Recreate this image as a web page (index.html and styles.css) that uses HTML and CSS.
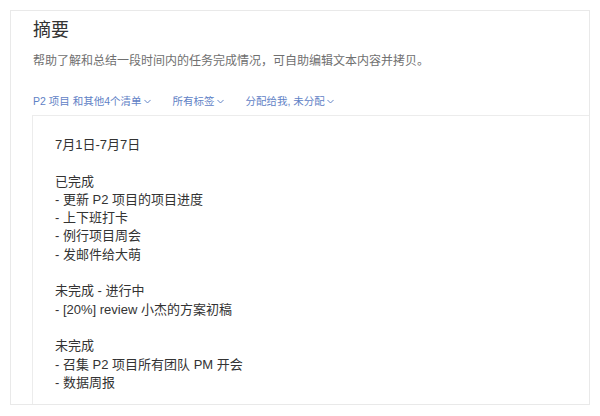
FILE: index.html
```html
<!DOCTYPE html>
<html lang="zh-CN">
<head>
<meta charset="utf-8">
<title>摘要</title>
<link rel="stylesheet" href="styles.css">
</head>
<body>
<div class="card">
  <h1 class="title">摘要</h1>
  <p class="desc">帮助了解和总结一段时间内的任务完成情况，可自助编辑文本内容并拷贝。</p>
  <div class="filters">
    <span class="filter">P2 项目 和其他4个清单<svg class="chev" viewBox="0 0 8 5"><path d="M0.5 0.7 L4 4.2 L7.5 0.7"/></svg></span>
    <span class="filter">所有标签<svg class="chev" viewBox="0 0 8 5"><path d="M0.5 0.7 L4 4.2 L7.5 0.7"/></svg></span>
    <span class="filter">分配给我, 未分配<svg class="chev" viewBox="0 0 8 5"><path d="M0.5 0.7 L4 4.2 L7.5 0.7"/></svg></span>
  </div>
  <div class="summary">
    <div class="line">7月1日-7月7日</div>
    <div class="line blank"></div>
    <div class="line">已完成</div>
    <div class="line">- 更新 P2 项目的项目进度</div>
    <div class="line">- 上下班打卡</div>
    <div class="line">- 例行项目周会</div>
    <div class="line">- 发邮件给大萌</div>
    <div class="line blank"></div>
    <div class="line">未完成 - 进行中</div>
    <div class="line">- [20%] review 小杰的方案初稿</div>
    <div class="line blank"></div>
    <div class="line">未完成</div>
    <div class="line">- 召集 P2 项目所有团队 PM 开会</div>
    <div class="line">- 数据周报</div>
  </div>
</div>
</body>
</html>
```

FILE: styles.css
```css
html, body {
  margin: 0;
  padding: 0;
  background: #ffffff;
}
body {
  font-family: "Liberation Sans", "Noto Sans CJK SC", sans-serif;
  color: #333333;
}
.card {
  margin: 10px 10px 0 10px;
  border: 1px solid #e9e9e9;
  padding: 7px 0 0 22px;
  box-sizing: border-box;
  width: 580px;
  height: 395px;
  overflow: hidden;
}
.title {
  margin: 0;
  font-size: 18px;
  font-weight: normal;
  line-height: 24px;
  color: #333333;
}
.desc {
  margin: 10px 0 0 0;
  font-size: 12px;
  line-height: 18px;
  color: #707070;
}
.filters {
  margin-top: 23px;
  display: flex;
  gap: 22px;
  font-size: 10.5px;
  line-height: 16px;
  color: #5f82c6;
}
.filter {
  display: inline-flex;
  align-items: center;
}
.chev {
  width: 7px;
  height: 5px;
  margin-left: 2px;
  margin-top: 1px;
  fill: none;
  stroke: #5f82c6;
  stroke-width: 1.1;
}
.summary {
  margin: 6px 0 0 -1px;
  border-top: 1px solid #ececec;
  border-left: 1px solid #ececec;
  padding: 20px 0 0 22px;
  height: 300px;
  font-size: 13px;
  color: #333333;
}
.line {
  line-height: 18.3px;
  height: 18.3px;
  white-space: nowrap;
}
```
